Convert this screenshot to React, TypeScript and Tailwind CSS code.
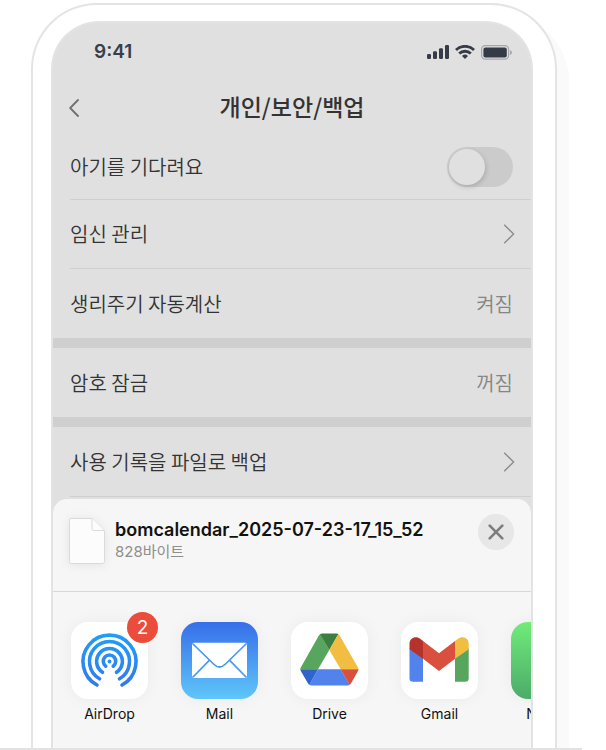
import React from "react";

const korean = "font-['Noto_Sans_CJK_KR','Noto_Sans',sans-serif]";
const latin = "font-['Inter','Noto_Sans_CJK_KR',sans-serif]";

function ChevronRight() {
  return (
    <svg className="-mr-0.5 h-5 w-3" viewBox="0 0 12 20" fill="none" stroke="#8c8c8c" strokeWidth="1.4" aria-hidden="true">
      <path d="M1.2 0.8 L10.6 10 L1.2 19.2" />
    </svg>
  );
}

function StatusBar() {
  return (
    <div className="flex h-[58px] items-center justify-between pl-[41px] pr-[19px]">
      <span className={`${latin} text-[19px] leading-6 font-semibold text-[#383e4b]`}>9:41</span>
      <div className="flex items-center gap-1.5" aria-hidden="true">
        <svg className="h-3.5 w-[22px]" viewBox="0 0 22 14" fill="#363b48">
          <rect x="0" y="9" width="4" height="5" rx="1.3" />
          <rect x="6" y="6.2" width="4" height="7.8" rx="1.3" />
          <rect x="12" y="3.2" width="4" height="10.8" rx="1.3" />
          <rect x="18" y="0" width="4" height="14" rx="1.3" />
        </svg>
        <svg className="h-3.5 w-5" viewBox="0 0 20 14" fill="none" stroke="#363b48" strokeWidth="2.8">
          <path d="M1 5 A12.8 12.8 0 0 1 19 5" />
          <path d="M4.2 8.6 A8.3 8.3 0 0 1 15.8 8.6" />
          <path d="M7 10.9 A4.3 4.3 0 0 1 13 10.9 L10.5 13.6 Q10 14 9.5 13.6 Z" fill="#363b48" stroke="none" />
        </svg>
        <svg className="h-[15px] w-[31px]" viewBox="0 0 31 15" fill="none">
          <rect x="0.6" y="0.6" width="27" height="13.6" rx="3.6" stroke="#a5a7ac" strokeWidth="1.2" />
          <rect x="2.4" y="2.4" width="23.4" height="10" rx="2" fill="#363b48" />
          <path d="M29 5 Q31 6 31 7.5 Q31 9 29 10 Z" fill="#a5a7ac" />
        </svg>
      </div>
    </div>
  );
}

const rowText = `${korean} text-[20px] leading-7 font-[350] text-[#333333]`;

function LinkRow({ label, value }: { label: string; value?: string }) {
  return (
    <button type="button" className="flex h-[69px] w-full items-center justify-between pr-[18px] text-left">
      <span className={rowText}>{label}</span>
      {value ? <span className={`${korean} text-[20px] leading-7 font-[350] text-[#858585]`}>{value}</span> : <ChevronRight />}
    </button>
  );
}

function AirDropIcon() {
  return (
    <svg className="size-full" viewBox="0 0 77 77" fill="none" aria-hidden="true">
      <defs>
        <linearGradient id="airdrop" gradientUnits="userSpaceOnUse" x1="0" y1="11" x2="0" y2="66">
          <stop stopColor="#1f9ff8" />
          <stop offset="1" stopColor="#3478ec" />
        </linearGradient>
      </defs>
      <g stroke="url(#airdrop)" strokeWidth="3.6" strokeLinecap="round">
        <path d="M26 63 A26.5 26.5 0 1 1 51 63" />
        <path d="M28.5 56.8 A20 20 0 1 1 48.5 56.8" />
        <path d="M31.5 50.3 A12.9 12.9 0 1 1 45.5 50.3" />
        <path d="M34.8 44.2 A6.2 6.2 0 1 1 42.2 44.2" />
      </g>
      <circle cx="38.5" cy="39.5" r="1.9" fill="#2a8bf2" />
    </svg>
  );
}

function MailIcon() {
  return (
    <svg className="size-full" viewBox="0 0 77 77" fill="none" aria-hidden="true">
      <defs>
        <linearGradient id="mail" x1="0" y1="0" x2="0" y2="1">
          <stop stopColor="#376ee9" />
          <stop offset="1" stopColor="#5fc6f9" />
        </linearGradient>
      </defs>
      <rect width="77" height="77" fill="url(#mail)" />
      <rect x="11" y="20.7" width="55" height="35.3" rx="1.5" fill="white" />
      <g stroke="#4a98f0" strokeWidth="1.7">
        <path d="M11.5 21.5 L32.5 42 Q38.5 48 44.5 42 L65.5 21.5" />
        <path d="M11.5 55.5 L28.3 38.3 M65.5 55.5 L48.7 38.3" />
      </g>
    </svg>
  );
}

function DriveIcon() {
  return (
    <svg className="size-full" viewBox="0 0 77 77" aria-hidden="true">
      <defs>
        <clipPath id="drive">
          <path d="M31 11.5 H45.5 Q47.5 11.5 48.5 13.2 L67 45.6 Q68 47.3 67 49 L59.8 61.8 Q58.8 63.5 56.8 63.5 H20.2 Q18.2 63.5 17.2 61.8 L9.8 49 Q8.8 47.3 9.8 45.6 L28 13.2 Q29 11.5 31 11.5 Z" />
        </clipPath>
      </defs>
      <g clipPath="url(#drive)">
        <path d="M28.5 11 L38.3 28 L27 47.3 H8 Z" fill="#58a55d" />
        <path d="M28.2 11 H48 L38.3 28 Z" fill="#3b7e40" />
        <path d="M48 11 L69 47.3 H49.7 L38.3 28 Z" fill="#f2be42" />
        <path d="M8 47.3 H27 L17.8 64 Z" fill="#3064cb" />
        <path d="M27 47.3 H49.7 L59.4 64 H17.6 Z" fill="#5283ec" />
        <path d="M49.7 47.3 H69 L59.2 64 Z" fill="#d9503f" />
      </g>
    </svg>
  );
}

function GmailIcon() {
  return (
    <svg className="size-full" viewBox="0 0 77 77" aria-hidden="true">
      <path d="M8.5 26 L22 36 V59.7 H12 Q8.5 59.7 8.5 56.2 Z" fill="#5283ec" />
      <path d="M67.7 26 L54 36 V59.7 H64.2 Q67.7 59.7 67.7 56.2 Z" fill="#58a55d" />
      <path d="M22 19 L38 31.3 L54 19 V36.7 L38 48.9 L22 36.7 Z" fill="#d9503f" />
      <path d="M22 19 V36.7 L8.5 27.3 V21.5 C8.5 15.5 15.4 13.2 19.5 17 Z" fill="#b5332a" />
      <path d="M54 19 V36.7 L67.7 27.3 V21.5 C67.7 15.5 60.8 13.2 56.7 17 Z" fill="#f2be42" />
    </svg>
  );
}

const apps = [
  { name: "AirDrop", icon: <AirDropIcon />, badge: 2 },
  { name: "Mail", icon: <MailIcon /> },
  { name: "Drive", icon: <DriveIcon /> },
  { name: "Gmail", icon: <GmailIcon /> },
  { name: "NAVER", icon: <div className="size-full bg-linear-to-b from-[#70ec78] to-[#4cab6a]" /> },
];

function ShareSheet() {
  return (
    <section className={`${latin} mt-0.5 rounded-t-[14px] bg-[#f6f6f6]`}>
      <header className="flex h-[93px] items-start border-b border-[#d6d7d6] pr-[17px] pl-4 pt-[15px]">
        <svg className="mt-1 h-[46px] w-9 shrink-0 drop-shadow-[0_1px_5px_rgba(0,0,0,0.08)]" viewBox="0 0 36 46" fill="#fcfcfc" stroke="#d9dad9" aria-hidden="true">
          <path d="M2 0.5 H23 L35.5 13 V43.5 Q35.5 45.5 33.5 45.5 H2.5 Q0.5 45.5 0.5 43.5 V2 Q0.5 0.5 2 0.5 Z" />
          <path d="M23 0.5 V10.5 Q23 12.5 25 12.5 H35.2" />
        </svg>
        <div className="ml-2.5 mt-1 flex-1">
          <h2 className="text-[18px] leading-6 font-semibold text-[#111111] [font-optical-sizing:none]">bomcalendar_2025-07-23-17_15_52</h2>
          <p className="text-[15px] leading-5 text-[#8e8e8e]">828바이트</p>
        </div>
        <button type="button" aria-label="닫기" className="flex size-9 shrink-0 items-center justify-center rounded-full bg-[#e7e7e7]">
          <svg className="size-4" viewBox="0 0 16 16" stroke="#7d7d80" strokeWidth="2.6" strokeLinecap="round" aria-hidden="true">
            <path d="M1.7 1.7 L14.3 14.3 M14.3 1.7 L1.7 14.3" />
          </svg>
        </button>
      </header>
      <div className="flex gap-[33px] overflow-hidden pt-[30px] pb-6 pl-[18px]">
        {apps.map((app) => (
          <button key={app.name} type="button" className="relative flex w-[77px] shrink-0 flex-col items-center gap-[5px]">
            <span className="block size-[77px] overflow-hidden rounded-[17px] bg-white shadow-[0_0_16px_rgba(0,0,0,0.05)]">{app.icon}</span>
            <span className="text-[14px] leading-5 text-[#111111]">{app.name}</span>
            {app.badge && (
              <span className="absolute -top-2.5 -right-2.5 flex size-[31px] items-center justify-center rounded-full bg-[#eb4d3d] text-[19px] leading-6 text-white">
                {app.badge}
              </span>
            )}
          </button>
        ))}
      </div>
    </section>
  );
}

export default function App() {
  return (
    <div className="bg-white">
      <main className="mr-6 overflow-hidden border-b-2 border-[#e2e2e2] pt-[3px] pr-[25px] pl-[31px]">
        <div className="rounded-t-[66px] border-2 border-b-0 border-[#e4e4e4] bg-white pt-4 pr-[22px] pl-[18px] shadow-[12px_12px_0_#fafafa]">
          <div className="overflow-hidden rounded-t-[48px] border-2 border-b-0 border-[#e3e3e3] bg-[#e0e0e0]">
            <StatusBar />
            <header className="flex h-[54px] items-center pr-[42px] pl-4">
              <button type="button" aria-label="뒤로" className="flex h-8 w-[26px] items-center">
                <svg className="h-[18px] w-2.5" viewBox="0 0 10 18" fill="none" stroke="#707070" strokeWidth="1.8" strokeLinecap="round" strokeLinejoin="round" aria-hidden="true">
                  <path d="M9 1 L1.2 9 L9 17" />
                </svg>
              </button>
              <h1 className={`${korean} flex-1 pb-1 text-center text-[23px] leading-8 font-medium text-[#333333]`}>개인/보안/백업</h1>
            </header>
            <div className="divide-y divide-[#cfcfcf] pl-[17px]">
              <label className="flex h-[65px] items-center justify-between pr-[18px]">
                <span className={rowText}>아기를 기다려요</span>
                <input
                  type="checkbox"
                  className="h-10 w-[66px] appearance-none rounded-full bg-[#cbcbcb] p-0.5 before:block before:size-9 before:rounded-full before:bg-[#e0e0e0] before:shadow-[1px_2px_5px_rgba(0,0,0,0.16)] before:content-['']"
                />
              </label>
              <LinkRow label="임신 관리" />
              <LinkRow label="생리주기 자동계산" value="켜짐" />
            </div>
            <div className="border-y-10 border-[#cfcfcf] pl-[17px]">
              <LinkRow label="암호 잠금" value="꺼짐" />
            </div>
            <div className="pl-[17px]">
              <div className="border-b border-[#cfcfcf]">
                <LinkRow label="사용 기록을 파일로 백업" />
              </div>
            </div>
            <ShareSheet />
          </div>
        </div>
      </main>
    </div>
  );
}
